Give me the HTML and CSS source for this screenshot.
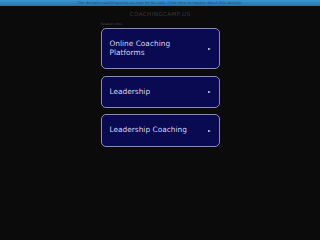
FILE: index.html
```html
<!DOCTYPE html>
<html>
<head>
<meta charset="utf-8">
<link rel="stylesheet" href="styles.css">
</head>
<body>
<div class="topbar">The domain coachingcamp.us may be for sale. Click here to inquire about this domain.</div>
<div class="title">COACHINGCAMP.US</div>
<div class="wrap">
  <div class="related">Related Links</div>
  <div class="list">
    <a class="item" href="#"><span class="label">Online Coaching<br>Platforms</span><span class="arrow"></span></a>
    <a class="item" href="#"><span class="label">Leadership</span><span class="arrow"></span></a>
    <a class="item" href="#"><span class="label">Leadership Coaching</span><span class="arrow"></span></a>
  </div>
</div>
</body>
</html>
```
FILE: styles.css
```css
html, body {
  margin: 0;
  padding: 0;
  background: #0b0b0b;
  font-family: "DejaVu Sans", sans-serif;
}
.topbar {
  height: 6px;
  line-height: 6px;
  background: linear-gradient(#3d94d6, #2b6fae);
  color: #1d4f86;
  font-size: 3.8px;
  text-align: center;
  white-space: nowrap;
  overflow: hidden;
}
.title {
  margin-top: 5px;
  height: 6px;
  line-height: 6px;
  text-align: center;
  color: #383838;
  font-size: 5.6px;
  letter-spacing: 0.4px;
}
.wrap {
  width: 119px;
  margin: 0 auto;
}
.related {
  margin-top: 5.4px;
  height: 4px;
  line-height: 4px;
  font-size: 3.2px;
  color: #4a4a4a;
}
.list {
  margin-top: 2.1px;
  display: flex;
  flex-direction: column;
  gap: 6.5px;
}
.item {
  display: flex;
  align-items: center;
  justify-content: space-between;
  padding: 11px 8px 11px 8px;
  background: #0a0a52;
  border: 1px solid #8a8ab8;
  border-radius: 5px;
  color: #d4d4ee;
  text-decoration: none;
  font-size: 7.4px;
  line-height: 8.3px;
}
.arrow {
  width: 0;
  height: 0;
  border-left: 3px solid #e0e0f0;
  border-top: 1.8px solid transparent;
  border-bottom: 1.8px solid transparent;
}
```
